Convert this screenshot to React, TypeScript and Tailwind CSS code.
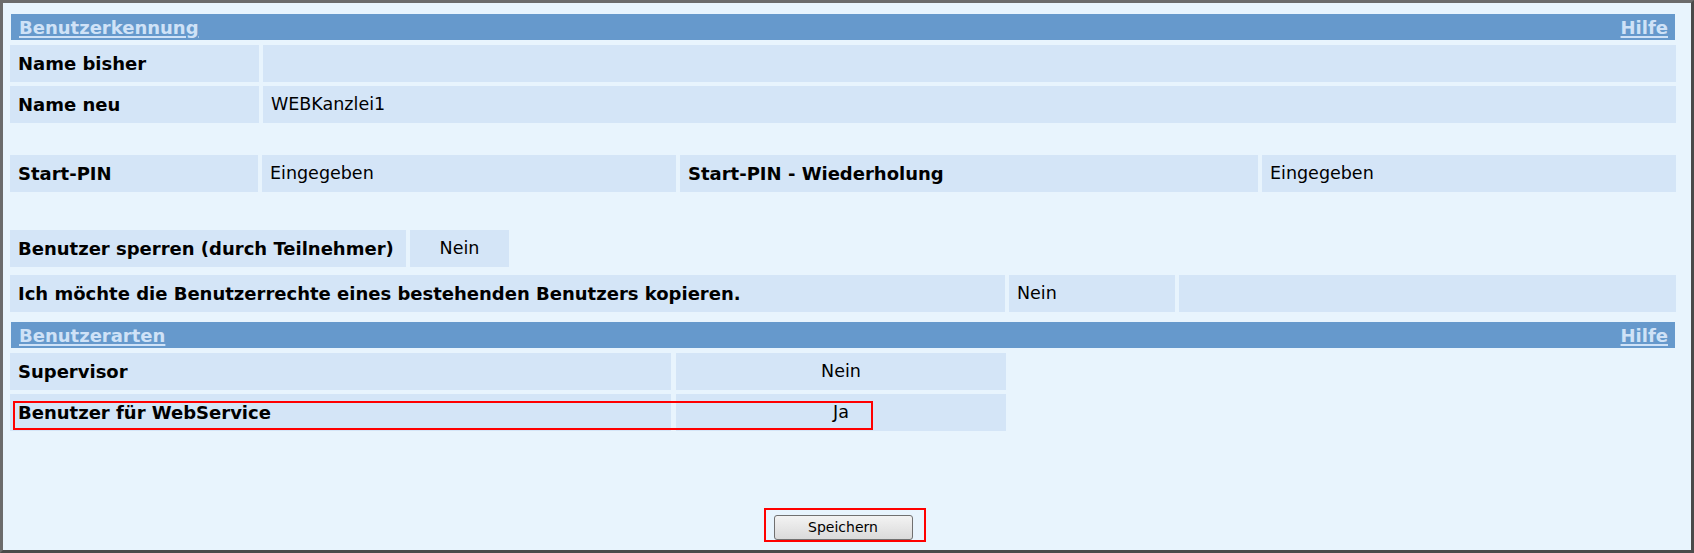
import React from 'react';

const cell = 'flex items-center h-[37px] bg-[#d4e5f7] px-2 shrink-0';
const label = `${cell} font-bold text-[18px]`;
const value = `${cell} text-[17.5px]`;

function SectionHeader({ title }: { title: string }) {
  return (
    <div className="mx-px flex h-[26px] items-center justify-between bg-[#6699cc] pl-2 pr-[7px] text-[18px] font-bold text-[#cfe2f7]">
      <a className="underline decoration-2 underline-offset-2">{title}</a>
      <a className="underline decoration-2 underline-offset-2">Hilfe</a>
    </div>
  );
}

export default function App() {
  return (
    <div
      className="relative box-border h-[553px] w-[1694px] border-[3px] border-[#6b6b6b] border-r-[#4a4a4a] border-b-[#4a4a4a] bg-[#e8f4fd] text-black"
      style={{ fontFamily: '"DejaVu Sans", Verdana, sans-serif' }}
    >
      <div className="w-[1666px] pl-[7px] pt-[11px] box-content">
        <SectionHeader title="Benutzerkennung" />

        <div className="mt-[5px] flex gap-1">
          <div className={`${label} w-[249px]`}>Name bisher</div>
          <div className={`${value} flex-1`}></div>
        </div>
        <div className="mt-1 flex gap-1">
          <div className={`${label} w-[249px]`}>Name neu</div>
          <div className={`${value} flex-1`}>WEBKanzlei1</div>
        </div>

        <div className="mt-[32px] flex gap-1">
          <div className={`${label} w-[248px]`}>Start-PIN</div>
          <div className={`${value} w-[414px]`}>Eingegeben</div>
          <div className={`${label} w-[578px]`}>Start-PIN - Wiederholung</div>
          <div className={`${value} flex-1 !shrink`}>Eingegeben</div>
        </div>

        <div className="mt-[38px] flex gap-1">
          <div className={`${label} w-[396px] text-[18.2px]`}>Benutzer sperren (durch Teilnehmer)</div>
          <div className={`${value} w-[99px] justify-center`}>Nein</div>
        </div>
        <div className="mt-2 flex gap-1">
          <div className={`${label} w-[995px]`}>Ich möchte die Benutzerrechte eines bestehenden Benutzers kopieren.</div>
          <div className={`${value} w-[166px]`}>Nein</div>
          <div className={`${value} flex-1 !shrink`}></div>
        </div>

        <div className="mt-[10px]">
          <SectionHeader title="Benutzerarten" />
        </div>

        <div className="mt-[5px] flex gap-[5px]">
          <div className={`${label} w-[661px]`}>Supervisor</div>
          <div className={`${value} w-[330px] justify-center`}>Nein</div>
        </div>
        <div className="mt-1 flex gap-[5px]">
          <div className={`${label} w-[661px]`}>Benutzer für WebService</div>
          <div className={`${value} w-[330px] justify-center`}>Ja</div>
        </div>

        <div className="mt-[84px] flex justify-center">
          <button
            className="h-[25px] w-[139px] rounded-[3px] border border-[#707070] bg-gradient-to-b from-[#f3f3f3] to-[#dadada] text-[14px] text-black"
            style={{ fontFamily: '"DejaVu Sans", Tahoma, sans-serif' }}
          >
            Speichern
          </button>
        </div>
      </div>

      {/* red annotation boxes */}
      <div className="pointer-events-none absolute left-[10px] top-[398px] h-[29px] w-[860px] border-2 border-[#ff0000]" />
      <div className="pointer-events-none absolute left-[761px] top-[505px] h-[34px] w-[162px] border-2 border-[#ff0000]" />
    </div>
  );
}
